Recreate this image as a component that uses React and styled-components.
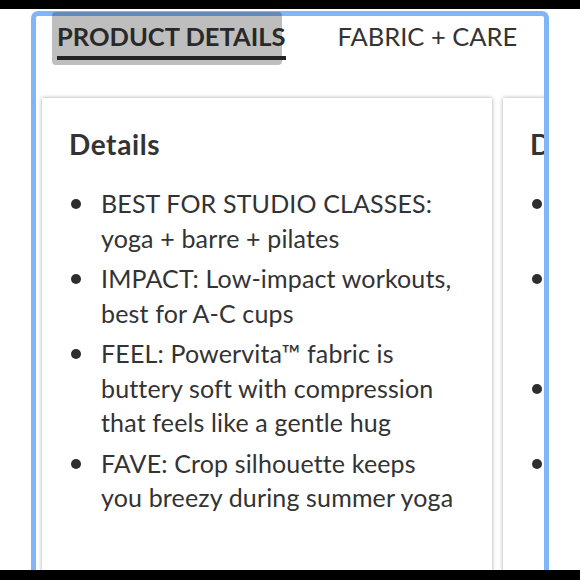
import React from "react";
import styled, { createGlobalStyle } from "styled-components";

const GlobalStyle = createGlobalStyle`
  html, body { margin: 0; padding: 0; background: #fff; }
  body { font-family: Lato, "Noto Sans", sans-serif; color: #333; }
  * { box-sizing: border-box; }
`;

const Screen = styled.div`
  width: 580px;
  height: 580px;
  display: flex;
  flex-direction: column;
  overflow: hidden;
  background: #fff;
`;

const BlackBar = styled.div`
  height: ${(p) => p.$h}px;
  flex-shrink: 0;
  background: #000;
`;

const Viewport = styled.div`
  flex: 1;
  position: relative;
  overflow: hidden;
  padding: 2px 31px 0 31px;
`;

const Frame = styled.div`
  height: 620px;
  border: 5px solid #80b5f6;
  border-radius: 7px 7px 0 0;
  background: #fff;
  overflow: hidden;
`;

const Tabs = styled.div`
  display: flex;
  align-items: flex-start;
  gap: 52px;
  padding: 5px 0 0 21px;
`;

const Tab = styled.div`
  font-size: 25.5px;
  line-height: 30px;
  font-weight: ${(p) => (p.$active ? 700 : 400)};
  color: ${(p) => (p.$active ? "#2a2a2a" : "#333")};
  padding-bottom: 5px;
  border-bottom: 4px solid ${(p) => (p.$active ? "#222" : "transparent")};
  white-space: nowrap;
`;

const Selection = styled.div`
  position: absolute;
  left: 52px;
  top: 3px;
  width: 230px;
  height: 53px;
  border-radius: 4px;
  background: rgba(40, 40, 40, 0.3);
  pointer-events: none;
`;

const Cards = styled.div`
  display: flex;
  gap: 11px;
  padding-left: 6px;
  margin-top: 38px;
`;

const Card = styled.div`
  flex-shrink: 0;
  width: 450px;
  height: 520px;
  background: #fff;
  box-shadow: 0 0 4px rgba(0, 0, 0, 0.35);
  padding: 29px 35px 0 27px;
`;

const Heading = styled.h2`
  margin: 0 0 25px 0;
  font-size: 28px;
  line-height: 34px;
  letter-spacing: 0.6px;
  font-weight: 700;
  color: #333;
`;

const List = styled.ul`
  margin: 0;
  padding: 0;
  list-style: none;
  display: flex;
  flex-direction: column;
  gap: 6px;
`;

const Item = styled.li`
  display: grid;
  grid-template-columns: 32px 1fr;
  font-size: 25px;
  line-height: 34.5px;
  letter-spacing: 0.15px;
  font-weight: 400;
  color: #333;
`;

const Dot = styled.span`
  width: 10px;
  height: 10px;
  margin: 13px 0 0 2px;
  border-radius: 50%;
  background: #2e2e2e;
`;

const details = [
  "BEST FOR STUDIO CLASSES: yoga + barre + pilates",
  "IMPACT: Low-impact workouts, best for A-C cups",
  "FEEL: Powervita™ fabric is buttery soft with compression that feels like a gentle hug",
  "FAVE: Crop silhouette keeps you breezy during summer yoga",
];

const details2 = [
  "BEST FOR STUDIO CLASSES: yoga + barre + pilates",
  "FEEL: Powervita™ fabric is buttery soft with compression that feels like a gentle hug",
  "IMPACT: Low-impact workouts, best for A-C cups",
  "FAVE: High waist stays put during every flow",
];

function DetailCard({ items }) {
  return (
    <Card>
      <Heading>Details</Heading>
      <List>
        {items.map((t) => (
          <Item key={t}>
            <Dot />
            <span>{t}</span>
          </Item>
        ))}
      </List>
    </Card>
  );
}

export default function App() {
  return (
    <>
      <GlobalStyle />
      <Screen>
        <BlackBar $h={9} />
        <Viewport>
          <Frame>
            <Tabs>
              <Tab $active>PRODUCT DETAILS</Tab>
              <Tab>FABRIC + CARE</Tab>
            </Tabs>
            <Cards>
              <DetailCard items={details} />
              <DetailCard items={details2} />
            </Cards>
          </Frame>
          <Selection />
        </Viewport>
        <BlackBar $h={10} />
      </Screen>
    </>
  );
}
